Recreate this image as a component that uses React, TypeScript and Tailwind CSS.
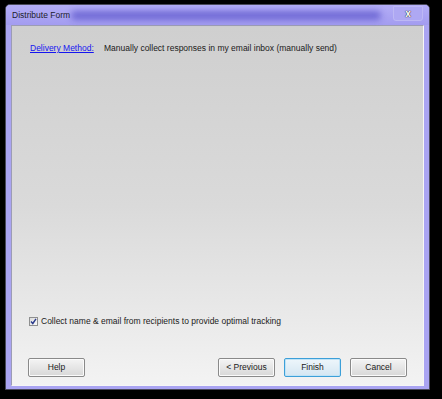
const font = "font-['Liberation_Sans',Arial,sans-serif]";

const WinButton = ({ label, focused }: { label: string; focused?: boolean }) => (
    <button
        className={`w-[57px] h-[19px] rounded-[2px] border text-[8.5px] text-[#1a1a1a] bg-gradient-to-b ${
            focused
                ? 'border-[#3c9fd8] from-[#eef6fb] to-[#d4e6f2] shadow-[inset_0_0_0_1px_#bfe3f7]'
                : 'border-[#8a8a8a] from-[#f4f4f4] to-[#d8d8d8] shadow-[inset_0_0_0_1px_#fbfbfb]'
        }`}
    >
        {label}
    </button>
);

const App = () => {
    return (
        <div className={`w-[442px] h-[399px] bg-black pl-[5px] pt-[4px] ${font}`}>
            <div className="w-[425px] h-[386px] border border-[#4a4a5a] rounded-t-[5px] bg-[#aaa4f2] flex flex-col overflow-hidden">
                {/* title bar */}
                <div className="relative h-[20px] flex items-center pl-[6px] bg-gradient-to-b from-[#b3adf6] to-[#a39cf0]">
                    <div className="absolute left-[65px] top-[6px] w-[310px] h-[9px] rounded-full bg-[#6660d0] blur-[3px] opacity-85" />
                    <span className="relative text-[8.5px] text-[#1c1c2c] pt-[1px]">Distribute Form</span>
                    <div className="absolute left-[387px] top-[1px] w-[30px] h-[15px] border border-[#bdb8f4] rounded-b-[3px] bg-[#aea8f3] flex items-center justify-center">
                        <span className="text-[10px] font-bold text-white leading-none [text-shadow:0_0_1px_#222,0_0_1px_#222]">x</span>
                    </div>
                </div>
                {/* client area */}
                <div className="flex-1 mx-[5px] mb-[3px] border border-[#9c9cb4] border-b-[#f6f6f6] border-r-[#f6f6f6] bg-gradient-to-b from-[#cfcfcf] via-[#dadada] to-[#f3f3f3] flex flex-col">
                    <div className="flex items-center pl-[18px] pt-[16px] text-[8.5px] text-[#1a1a1a]">
                        <span className="text-[#1515f0] underline w-[74px]">Delivery Method:</span>
                        <span>Manually collect responses in my email inbox (manually send)</span>
                    </div>
                    <div className="flex-1" />
                    <div className="flex items-center pl-[17px] text-[8.5px] text-[#1a1a1a]">
                        <div className="w-[9px] h-[9px] border border-[#8e8f8f] bg-gradient-to-br from-[#dcdcdc] to-[#fafafa] flex items-center justify-center mr-[3px]">
                            <svg width="7" height="7" viewBox="0 0 7 7">
                                <path d="M1 3.5 L2.8 5.5 L6 0.8" fill="none" stroke="#2a3a8c" strokeWidth="1.4" />
                            </svg>
                        </div>
                        <span>Collect name &amp; email from recipients to provide optimal tracking</span>
                    </div>
                    <div className="flex items-center pl-[16px] pr-[16px] pt-[30px] pb-[8px]">
                        <WinButton label="Help" />
                        <div className="flex-1" />
                        <div className="flex gap-[9px]">
                            <WinButton label="< Previous" />
                            <WinButton label="Finish" focused />
                            <WinButton label="Cancel" />
                        </div>
                    </div>
                </div>
            </div>
        </div>
    );
};

export default App;
